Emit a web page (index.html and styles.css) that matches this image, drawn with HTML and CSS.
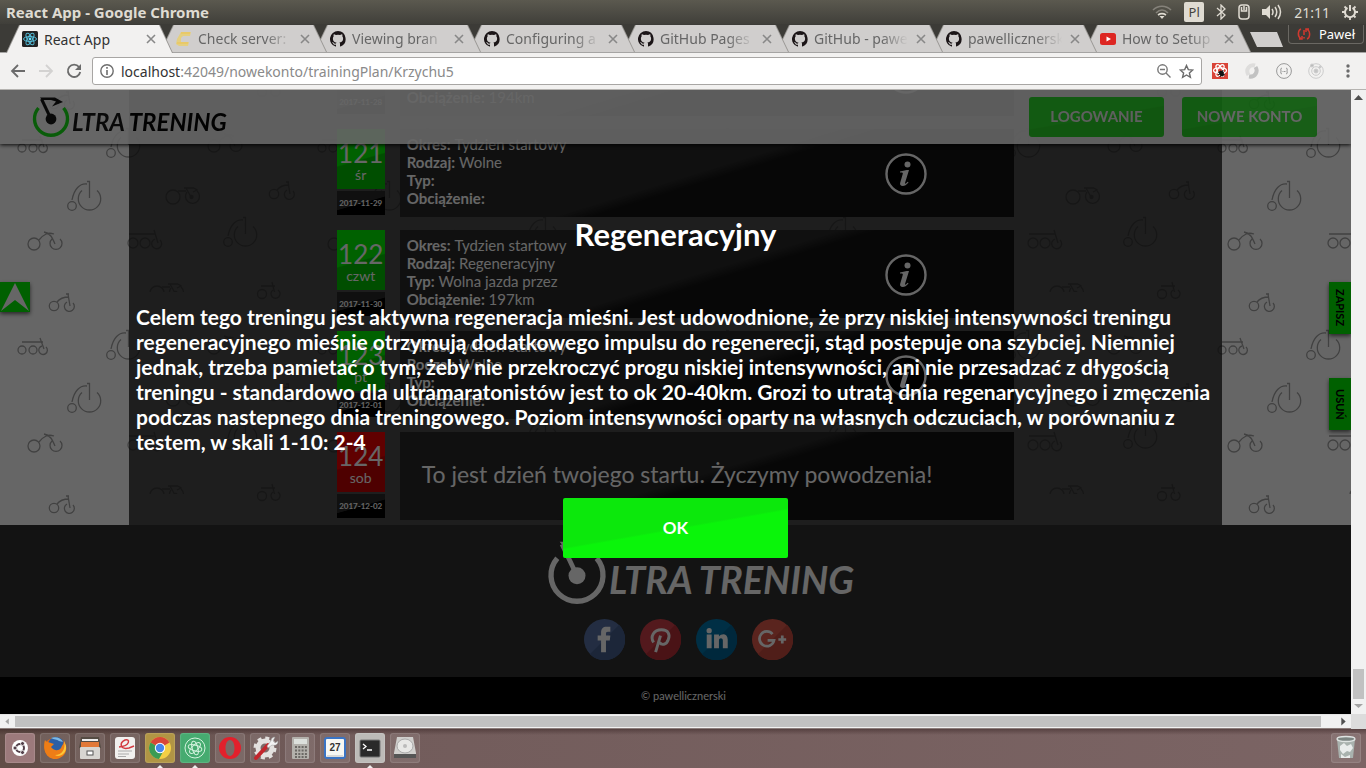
FILE: index.html
```html
<!DOCTYPE html>
<html lang="pl">
<head>
<meta charset="utf-8">
<title>React App</title>
<link rel="stylesheet" href="styles.css">
</head>
<body>
<svg class="defs" aria-hidden="true">
  <defs>
    <symbol id="github" viewBox="0 0 16 16"><path fill="#1b1517" d="M8 0a8 8 0 0 0-2.5 15.6c.4.1.5-.2.5-.4v-1.5c-2.200.5-2.700-1-2.700-1-.4-.9-.9-1.200-.9-1.200-.7-.5.1-.5.1-.5.8.1 1.200.8 1.200.8.7 1.200 1.900.9 2.300.7.1-.5.3-.9.5-1.100-1.800-.2-3.600-.9-3.600-4 0-.9.3-1.600.8-2.100-.1-.2-.4-1 .1-2.100 0 0 .7-.2 2.200.8a7.500 7.500 0 0 1 4 0c1.500-1 2.200-.8 2.200-.8.4 1.100.2 1.900.1 2.100.5.6.8 1.300.8 2.100 0 3.100-1.900 3.700-3.700 3.900.3.3.6.8.6 1.500v2.200c0 .2.1.5.6.4A8 8 0 0 0 8 0z"/></symbol>
    <symbol id="close" viewBox="0 0 10 10"><path d="M1 1l8 8M9 1l-8 8" stroke="currentColor" stroke-width="1.600" fill="none"/></symbol>
    <symbol id="wheel" viewBox="0 0 38 40">
      <path class="rim" d="M6.500 11a16.500 16.500 0 1 0 25 0" fill="none" stroke-width="3.400"/>
      <g class="fork"><circle cx="19" cy="22" r="5.400"/><path d="M19 22L9.500 2" stroke-width="3" fill="none"/><path d="M8 .5h15l8 4.500-11 4.500 4-5-5-1.500H10z"/></g>
    </symbol>
    <symbol id="info" viewBox="0 0 42 42"><circle cx="21" cy="21" r="19.500" fill="#000" stroke="#fff" stroke-width="2.400"/><circle cx="22.500" cy="11.500" r="3" fill="#fff"/><path fill="#fff" d="M15 18.500c3-.8 6-1.500 9-1.500l-4 13c-.2 1 .6 1 2.800-1.200l.7.8c-2 2.500-4 3.400-5.700 3.400-2.200 0-3.200-1.200-2.600-3.200l2.600-9c.3-1-.6-1.400-2.800-1.200z"/></symbol>
    <pattern id="bikes" width="300" height="202" patternUnits="userSpaceOnUse">
      <g id="bike-set" fill="none" stroke="#a2a2a2" stroke-width="1.300">
        <g id="penny"><circle cx="72" cy="116" r="4.300"/><path d="M82 100.500a11.200 11.200 0 1 0 15 0M89.500 91V108M87 91.500h3M72 110c2-11 8-17 15-16"/></g>
        <use href="#penny" x="156" y="36"/><use href="#penny" x="39" y="-53"/><use href="#penny" x="39" y="149"/>
        <circle cx="133" cy="153" r="5"/><circle cx="145" cy="153" r="5"/><path d="M155 149a5 5 0 1 0 5 1M129 144h26M154 140l4 13"/>
        <circle cx="22" cy="58" r="4"/><circle cx="33" cy="58" r="4"/><path d="M42 54a4.300 4.300 0 1 0 4 1M22 50h21M40 46l4 11"/>
        <g id="road"><circle cx="173" cy="107" r="7"/><path d="M187 102a7 7 0 1 0 10-1M178 101h8M184 98h10M186 98l5 9M194 98l3 2-4 2"/><circle cx="191.500" cy="107" r="1.500" fill="#a2a2a2"/></g>
        <use href="#road" x="-16" y="96"/>
        <g id="city"><circle cx="274" cy="104" r="4.700"/><path d="M287 100a5 5 0 1 0 6 1M277 100c3-4 7-5 12-5M288 92l2 12M286 92h3"/></g>
        <use href="#city" x="-220" y="112"/><use href="#city" x="-220" y="-90"/>
        <g id="cruiser"><circle cx="34" cy="154" r="6"/><path d="M52 149a6 6 0 1 0 8 0M39 150c5-6 9-8 15-6M44 142c6 1 8 5 11 12"/></g>
        <use href="#cruiser" x="180" y="-98"/>
        <circle cx="262" cy="2" r="4.500"/><path d="M273-2a4.500 4.500 0 1 0 5 0"/><circle cx="262" cy="204" r="4.500"/><path d="M273 200a4.500 4.500 0 1 0 5 0M261 196h14M272 192l3 12"/>
      </g>
    </pattern>
  </defs>
</svg>

<header class="titlebar">
  <h1 class="window-title">React App - Google Chrome</h1>
  <div class="tray">
    <svg width="20" height="14" viewBox="0 0 20 14" fill="none" stroke-width="1.600"><path d="M1 5c5-5 13-5 18 0M4 8c4-4 8-4 12 0" stroke="#85827a"/><path d="M6 10c3-2 5-2 8 0" stroke="#dfdbd2"/><path d="M7.500 11l2.500 3 2.500-3z" fill="#dfdbd2"/></svg>
    <span class="lang">Pl</span>
    <svg width="10" height="16" viewBox="0 0 10 16"><path d="M1 4l8 7-4 4V1l4 4-8 7" fill="none" stroke="#dfdbd2" stroke-width="1.300"/></svg>
    <svg width="12" height="16" viewBox="0 0 12 16" fill="none" stroke="#dfdbd2" stroke-width="1.500"><rect x="1" y="1" width="10" height="14" rx="3"/><path d="M3.500 3v4h5V3M6 2v4"/></svg>
    <svg width="20" height="16" viewBox="0 0 20 16"><path d="M0 5h4l4-4v14l-4-4H0z" fill="#dfdbd2"/><path d="M10 5q2 3 0 6M13 3q3.500 5 0 10M16 1q5 7 0 14" fill="none" stroke="#dfdbd2" stroke-width="1.500"/></svg>
    <time>21:11</time>
    <svg width="16" height="16" viewBox="0 0 16 16" fill="none" stroke="#dfdbd2"><path d="M5.500 3.800a5 5 0 1 0 5 0M8 1v6" stroke-width="2"/><path d="M2.500 2.500l2 2M13.500 2.500l-2 2M0 8h3M16 8h-3M2.500 13.500l2-2M13.500 13.500l-2-2M8 13v3" stroke-width="1.800"/></svg>
  </div>
</header>

<nav class="tabs" aria-label="Karty">
  <div class="tab active"><svg class="fav" viewBox="0 0 16 16"><rect width="16" height="16" rx="1.500" fill="#222"/><g fill="none" stroke="#53bbd6"><ellipse cx="8" cy="8" rx="6.500" ry="2.500"/><ellipse cx="8" cy="8" rx="6.500" ry="2.500" transform="rotate(60 8 8)"/><ellipse cx="8" cy="8" rx="6.500" ry="2.500" transform="rotate(120 8 8)"/></g><circle cx="8" cy="8" r="1.400" fill="#61dafb"/></svg><span class="label">React App</span><button class="x" aria-label="Zamknij"><svg><use href="#close"/></svg></button></div>
  <div class="tab"><svg class="fav" viewBox="0 0 16 16"><path d="M5 1h10l-1 4H7l-2 2v4h8l-1 4H3L0 13l1-5z" fill="#e4cf80"/><path d="M5 2h9M1 12h11" stroke="#edc350"/></svg><span class="label">Check server:</span><button class="x" aria-label="Zamknij"><svg><use href="#close"/></svg></button></div>
  <div class="tab"><svg class="fav"><use href="#github"/></svg><span class="label">Viewing bran</span><button class="x" aria-label="Zamknij"><svg><use href="#close"/></svg></button></div>
  <div class="tab"><svg class="fav"><use href="#github"/></svg><span class="label">Configuring a</span><button class="x" aria-label="Zamknij"><svg><use href="#close"/></svg></button></div>
  <div class="tab"><svg class="fav"><use href="#github"/></svg><span class="label">GitHub Pages</span><button class="x" aria-label="Zamknij"><svg><use href="#close"/></svg></button></div>
  <div class="tab"><svg class="fav"><use href="#github"/></svg><span class="label">GitHub - pawe</span><button class="x" aria-label="Zamknij"><svg><use href="#close"/></svg></button></div>
  <div class="tab"><svg class="fav"><use href="#github"/></svg><span class="label">pawellicznersk</span><button class="x" aria-label="Zamknij"><svg><use href="#close"/></svg></button></div>
  <div class="tab"><svg class="fav" viewBox="0 0 16 16"><rect y="2" width="16" height="12" rx="2.500" fill="#dd2622"/><path d="M6.500 5.500v5L11 8z" fill="#fff"/></svg><span class="label">How to Setup</span><button class="x" aria-label="Zamknij"><svg><use href="#close"/></svg></button></div>
  <button class="new-tab" aria-label="Nowa karta"></button>
  <button class="profile"><svg width="14" height="12" viewBox="0 0 14 12" fill="none" stroke="#d2392f" stroke-width="1.500"><path d="M4 1C1 2 0 8 4 11M2 11h3V8M10 11c3-1 4-7 0-10M12 1H9v3M7 2v5M7 9v1.500"/></svg>Paweł</button>
</nav>

<div class="toolbar">
  <button class="tool" aria-label="Wstecz"><svg width="16" height="16" viewBox="0 0 16 16" fill="none" stroke="#6b6b6b" stroke-width="1.800"><path d="M15 8H2M8 2L2 8l6 6"/></svg></button>
  <button class="tool" aria-label="Dalej"><svg width="16" height="16" viewBox="0 0 16 16" fill="none" stroke="#d3d2d1" stroke-width="1.800"><path d="M1 8h13M8 2l6 6-6 6"/></svg></button>
  <button class="tool" aria-label="Odśwież"><svg width="16" height="16" viewBox="0 0 16 16"><path d="M13 4a6.200 6.200 0 1 0 1.200 5" fill="none" stroke="#6b6b6b" stroke-width="1.900"/><path d="M15 1v6H9z" fill="#6b6b6b"/></svg></button>
  <div class="omnibox">
    <svg width="14" height="14" viewBox="0 0 14 14"><circle cx="7" cy="7" r="6.200" fill="none" stroke="#6e6e6e" stroke-width="1.400"/><path d="M7 6v5M7 3v1.700" stroke="#6e6e6e" stroke-width="1.600"/></svg>
    <label for="url">localhost</label><input id="url" type="text" value=":42049/nowekonto/trainingPlan/Krzychu5">
    <svg width="14" height="14" viewBox="0 0 14 14" fill="none" stroke="#777" stroke-width="1.400"><circle cx="5.500" cy="5.500" r="4.700"/><path d="M9 9l4.500 4.500M3 5.500h5"/></svg>
    <svg width="15" height="15" viewBox="0 0 15 15" fill="none" stroke="#6b6b6b" stroke-width="1.400"><path d="M7.500 1.500l1.800 4.100 4.500.4-3.400 3 1 4.400-3.900-2.400-3.900 2.400 1-4.400-3.400-3 4.500-.4z"/></svg>
  </div>
  <div class="extensions">
    <svg width="16" height="16" viewBox="0 0 16 16"><path fill="#d94337" d="M0 0h16v16H0z"/><g fill="none" stroke="#fff" stroke-width="1.200"><ellipse cx="8" cy="7.500" rx="6.500" ry="2.600"/><ellipse cx="8" cy="7.500" rx="6.500" ry="2.600" transform="rotate(60 8 7.500)"/><ellipse cx="8" cy="7.500" rx="6.500" ry="2.600" transform="rotate(120 8 7.500)"/></g><ellipse cx="9.500" cy="10.500" rx="2" ry="3.200" fill="#111" transform="rotate(-35 9.500 10.500)"/><path d="M6 9l7 3M11 7l-3 7M6 12l6-3" stroke="#111"/></svg>
    <svg width="16" height="16" viewBox="0 0 16 16" fill="none" stroke-width="4"><path d="M11 2.500C6 1 1 6 4.500 12" stroke="#dedddc"/><path d="M5 13.500c6 1 9.500-5 6.500-9.500" stroke="#c2c2c2"/></svg>
    <svg width="16" height="16" viewBox="0 0 16 16" fill="none" stroke="#999"><circle cx="8" cy="8" r="7.400"/><path d="M6 5q-2 0-1 3 -1 3 1 3M10 5q2 0 1 3 1 3-1 3"/><path d="M6.500 8.500h3.500" stroke-dasharray="1 .5"/></svg>
    <svg width="16" height="16" viewBox="0 0 16 16" fill="none" stroke="#ccc"><circle cx="8" cy="8" r="7.300"/><circle cx="8" cy="8" r="4.300"/><circle cx="8" cy="8" r="2" fill="#c4c4c4"/><circle cx="4" cy="2.500" r="1.500" fill="#bbb"/><circle cx="12" cy="4" r="1" fill="#bbb"/></svg>
    <svg width="16" height="16" viewBox="0 0 16 16" fill="#6b6b6b"><circle cx="8" cy="3" r="1.700"/><circle cx="8" cy="8" r="1.700"/><circle cx="8" cy="13" r="1.700"/></svg>
  </div>
</div>

<div class="window">
  <div class="page">
    <svg class="pattern" aria-hidden="true"><rect width="100%" height="100%" fill="url(#bikes)"/></svg>
    <main class="plan">
      <article class="day">
        <div class="stamp"><div class="tile"><strong>120</strong><span>wt</span></div><time>2017-11-28</time></div>
        <div class="card"><dl><div><dt>Okres:</dt> <dd>Tydzien startowy</dd></div><div><dt>Rodzaj:</dt> <dd>Regeneracyjny</dd></div><div><dt>Typ:</dt> <dd>Wolna jazda przez</dd></div><div><dt>Obciążenie:</dt> <dd>194km</dd></div></dl><button class="info" aria-label="Informacje"><svg><use href="#info"/></svg></button></div>
      </article>
      <article class="day">
        <div class="stamp"><div class="tile"><strong>121</strong><span>śr</span></div><time>2017-11-29</time></div>
        <div class="card"><dl><div><dt>Okres:</dt> <dd>Tydzien startowy</dd></div><div><dt>Rodzaj:</dt> <dd>Wolne</dd></div><div><dt>Typ:</dt> <dd></dd></div><div><dt>Obciążenie:</dt> <dd></dd></div></dl><button class="info" aria-label="Informacje"><svg><use href="#info"/></svg></button></div>
      </article>
      <article class="day">
        <div class="stamp"><div class="tile"><strong>122</strong><span>czwt</span></div><time>2017-11-30</time></div>
        <div class="card"><dl><div><dt>Okres:</dt> <dd>Tydzien startowy</dd></div><div><dt>Rodzaj:</dt> <dd>Regeneracyjny</dd></div><div><dt>Typ:</dt> <dd>Wolna jazda przez</dd></div><div><dt>Obciążenie:</dt> <dd>197km</dd></div></dl><button class="info" aria-label="Informacje"><svg><use href="#info"/></svg></button></div>
      </article>
      <article class="day">
        <div class="stamp"><div class="tile"><strong>123</strong><span>pt</span></div><time>2017-12-01</time></div>
        <div class="card"><dl><div><dt>Okres:</dt> <dd>Tydzien startowy</dd></div><div><dt>Rodzaj:</dt> <dd>Wolne</dd></div><div><dt>Typ:</dt> <dd></dd></div><div><dt>Obciążenie:</dt> <dd></dd></div></dl><button class="info" aria-label="Informacje"><svg><use href="#info"/></svg></button></div>
      </article>
      <article class="day start">
        <div class="stamp"><div class="tile"><strong>124</strong><span>sob</span></div><time>2017-12-02</time></div>
        <div class="card"><p>To jest dzień twojego startu. Życzymy powodzenia!</p></div>
      </article>
    </main>
    <footer class="footer">
      <div class="footer-main">
        <div class="logo logo-large"><svg><use href="#wheel"/></svg><span>LTRA TRENING</span></div>
        <div class="social">
          <a href="#" aria-label="Facebook"><svg viewBox="0 0 42 42"><circle cx="21" cy="21" r="21" fill="#5872a6"/><path d="M36 6a21 21 0 0 1-30 30z" fill="#465f90"/><path d="M17.500 34V22H14v-5h3.500v-3c0-4 2-6 5.500-6h4v5h-2.500c-1.500 0-2 .7-2 2v2H27l-.6 5h-3.900v12z" fill="#fff"/></svg></a>
          <a href="#" aria-label="Pinterest"><svg viewBox="0 0 42 42"><circle cx="21" cy="21" r="21" fill="#d04049"/><path d="M36 6a21 21 0 0 1-30 30z" fill="#b83039"/><path d="M14 24c-4-6 0-13 8-13 7 0 9 5 7 10-2 6-7 6-9 3M21 17l-5 17" fill="none" stroke="#fff" stroke-width="3"/></svg></a>
          <a href="#" aria-label="LinkedIn"><svg viewBox="0 0 42 42"><circle cx="21" cy="21" r="21" fill="#0077ad"/><path d="M36 6a21 21 0 0 1-30 30z" fill="#006496"/><circle cx="13.500" cy="12" r="2.700" fill="#fff"/><path d="M11 16h5v14h-5zM18.500 16h5v2c3-4 9-3 9 3v9h-5v-8c0-3-4-3-4 0v8h-5z" fill="#fff"/></svg></a>
          <a href="#" aria-label="Google+"><svg viewBox="0 0 42 42"><circle cx="21" cy="21" r="21" fill="#e15a4d"/><path d="M36 6a21 21 0 0 1-30 30z" fill="#c84b40"/><path d="M21 15.500a7.500 7.500 0 1 0 1.500 6.500H16M27 21h8M31 17v8" fill="none" stroke="#fff" stroke-width="2.800"/></svg></a>
        </div>
      </div>
      <p class="copyright">© pawellicznerski</p>
    </footer>
    <div class="site-header">
      <div class="logo"><svg><use href="#wheel"/></svg><span>LTRA TRENING</span></div>
      <div class="account"><button>LOGOWANIE</button><button>NOWE KONTO</button></div>
    </div>
    <button class="to-top" aria-label="Do góry"><svg viewBox="0 0 30 30"><path d="M15 1l14 28-14-11L1 29z" fill="#fff"/></svg></button>
    <button class="side save">ZAPISZ</button>
    <button class="side remove">USUŃ</button>
    <div class="overlay">
      <section class="dialog" role="dialog" aria-labelledby="dialog-title">
        <h2 id="dialog-title">Regeneracyjny</h2>
        <p>Celem tego treningu jest aktywna regeneracja mieśni. Jest udowodnione, że przy niskiej intensywności treningu regeneracyjnego mieśnie otrzymują dodatkowego impulsu do regenerecji, stąd postepuje ona szybciej. Niemniej jednak, trzeba pamietać o tym, żeby nie przekroczyć progu niskiej intensywności, ani nie przesadzać z dłygością treningu - standardowo dla ultramaratonistów jest to ok 20-40km. Grozi to utratą dnia regenarycyjnego i zmęczenia podczas nastepnego dnia treningowego. Poziom intensywności oparty na własnych odczuciach, w porównaniu z testem, w skali 1-10: 2-4</p>
        <button class="ok">OK</button>
      </section>
    </div>
  </div>
  <div class="vscroll"><svg viewBox="0 0 15 15"><path d="M3 10l4.500-5 4.500 5z" fill="#505050"/></svg><i></i><svg viewBox="0 0 15 15"><path d="M3 5h9l-4.500 4z" fill="#a3a3a3"/></svg></div>
  <div class="hscroll"><svg viewBox="0 0 15 15"><path d="M9 4v7L5 7.500z" fill="#a3a3a3"/></svg><i></i><svg viewBox="0 0 15 15"><path d="M5 3v9l5-4.500z" fill="#505050"/></svg></div>
  <div class="corner"></div>
</div>

<nav class="dock" aria-label="Programy">
  <button class="app ubuntu" aria-label="Ubuntu"><svg viewBox="0 0 30 30"><circle cx="15" cy="15" r="8" fill="#fff"/><circle cx="15" cy="15" r="4" fill="none" stroke="#54404a" stroke-width="2"/><g fill="#54404a" stroke="#fff" stroke-width=".8"><circle cx="10" cy="15" r="2"/><circle cx="17.500" cy="10.500" r="2"/><circle cx="17.500" cy="19.500" r="2"/></g></svg></button>
  <button class="app" aria-label="Firefox"><svg viewBox="0 0 30 30"><circle cx="15" cy="15" r="10.500" fill="#e46a13"/><circle cx="16" cy="12" r="8" fill="#2c5fa5"/><path d="M11 5c5-2 10 0 12 4l-4-1c-2-2-5-1-8-3z" fill="#7cb9e6"/><path d="M5 7c1 2 4 2 6 3l3 1-3 3c2 3 7 5 10 1 1-3 3-4 3-7 6 10-1 18-9 18S2 17 5 7z" fill="#ee7d16"/><path d="M24 8c2 8-2 14-9 14 4 3 12-1 11-9z" fill="#fcc737"/></svg></button>
  <button class="app" aria-label="Pliki"><svg viewBox="0 0 30 30"><path d="M6 4h18l2 11H4z" fill="#544b43"/><path d="M7 6h16v2H7z" fill="#eee"/><path d="M6 9h18v5H6z" fill="#e17837"/><rect x="5" y="14" width="20" height="12" rx="1" fill="#d7d5d1"/><rect x="12" y="18" width="6" height="4" fill="#fff" stroke="#555"/></svg></button>
  <button class="app" aria-label="Dokumenty"><svg viewBox="0 0 30 30"><rect x="5" y="4" width="20" height="22" rx="3" fill="#f1f0ee"/><path d="M9 14c12-1 11-9 6-7-6 3-5 10 4 8l5-2" fill="none" stroke="#d33a40" stroke-width="1.500"/><path d="M8 18h14M8 21h11M8 23.500h8" stroke="#aaa"/></svg></button>
  <button class="app chrome running" aria-label="Chrome"><svg viewBox="0 0 30 30"><circle cx="15" cy="15" r="11" fill="#f3cf45"/><path d="M15 15L5.500 9.500a11 11 0 0 1 19 0z" fill="#d84738"/><path d="M15 15L5.500 9.500A11 11 0 0 0 14 26l5-9z" fill="#3b9b54"/><circle cx="15" cy="15" r="5.200" fill="#fff"/><circle cx="15" cy="15" r="4.200" fill="#4786eb"/></svg></button>
  <button class="app atom running" aria-label="Atom"><svg viewBox="0 0 30 30" fill="none" stroke="#d5f3df"><circle cx="15" cy="15" r="10"/><ellipse cx="15" cy="15" rx="7" ry="2.800" transform="rotate(15 15 15)"/><ellipse cx="15" cy="15" rx="7" ry="2.800" transform="rotate(75 15 15)"/><ellipse cx="15" cy="15" rx="7" ry="2.800" transform="rotate(135 15 15)"/></svg></button>
  <button class="app" aria-label="Opera"><svg viewBox="0 0 30 30"><path fill-rule="evenodd" d="M15 4a11 11 0 1 0 0 22 11 11 0 0 0 0-22zm0 3c3 0 4.500 4 4.500 8S18 23 15 23s-4.500-4-4.500-8S12 7 15 7z" fill="#e2202c"/></svg></button>
  <button class="app" aria-label="Ustawienia"><svg viewBox="0 0 30 30"><circle cx="15" cy="15" r="7" fill="none" stroke="#e3e1df" stroke-width="5"/><circle cx="15" cy="15" r="10" fill="none" stroke="#e3e1df" stroke-width="3" stroke-dasharray="4 3.850"/><path d="M6 25L18 12" stroke="#c3262c" stroke-width="4" stroke-linecap="round"/><path d="M17 13l4-5c0-3 2-4 4-4l-2 4 2 2 3-2c0 4-3 5-6 4l-4 3z" fill="#f2f2f2" stroke="#999" stroke-width=".5"/></svg></button>
  <button class="app" aria-label="Kalkulator"><svg viewBox="0 0 30 30"><rect x="7" y="4" width="17" height="22" rx="1" fill="#b3b1ac"/><rect x="9" y="6" width="13" height="5" fill="#dce0dc"/><path d="M10 14h12M10 17.500h12M10 21h12M10 24h12" stroke="#6b6965" stroke-width="2" stroke-dasharray="2 1.300"/></svg></button>
  <button class="app" aria-label="Kalendarz"><svg viewBox="0 0 30 30"><rect x="5" y="5" width="20" height="20" rx="2" fill="#f7f7f3" stroke="#3a74c4" stroke-width="2"/><path d="M7 23h16" stroke="#bbb"/><text x="15" y="18" text-anchor="middle" class="cal">27</text></svg></button>
  <button class="app terminal running" aria-label="Terminal"><svg viewBox="0 0 30 30"><rect x="5" y="7" width="20" height="17" rx="1" fill="#2a2a2a" stroke="#777"/><path d="M8 11l3 2.500L8 16M12 17h5" fill="none" stroke="#fff" stroke-width="1.300"/></svg></button>
  <button class="app" aria-label="Dysk"><svg viewBox="0 0 30 30"><path d="M7 4h16l3 16v5H4v-5z" fill="#d0cfcd"/><path d="M4 21h22v4H4z" fill="#555"/><ellipse cx="15" cy="13" rx="8" ry="7" fill="#e8e8e6" stroke="#aaa"/><circle cx="15" cy="13" r="2" fill="#bbb"/></svg></button>
  <button class="app trash" aria-label="Kosz"><svg viewBox="0 0 30 30"><path d="M6 6h18l-2 19H8z" fill="#a9b2ae"/><ellipse cx="15" cy="6" rx="9" ry="2.500" fill="#7d8683" stroke="#dfe4e2" stroke-width="1.300"/><path d="M9 13l4-3 3 3 4-2 2 4-3 4-3-1-4 3-3-4zM10 21l4 3 5-2v3h-9z" fill="#e9eceb"/></svg></button>
</nav>
</body>
</html>
```
FILE: styles.css
```css
* { box-sizing: border-box; }
body {
  margin: 0;
  height: 100vh;
  display: flex;
  flex-direction: column;
  overflow: hidden;
  font-family: Lato, "Liberation Sans", sans-serif;
}
button { border: 0; padding: 0; background: none; font: inherit; color: inherit; display: block; }
button svg, a svg { display: block; width: 100%; height: 100%; }
h1, h2, p, dl, dd { margin: 0; }
svg { flex: none; }
.defs { position: absolute; width: 0; height: 0; }

/* Window chrome */
.titlebar, .tabs, .toolbar { font-family: "Noto Sans", "Open Sans", sans-serif; flex: none; }
.titlebar {
  height: 24px;
  padding: 0 8px 0 6px;
  display: flex;
  align-items: center;
  justify-content: space-between;
  background: linear-gradient(#5b594f, #403f3a);
  color: #dfdbd2;
}
.window-title { font-size: 15px; line-height: 20px; font-weight: 700; }
.tray { display: flex; align-items: center; gap: 12px; font-size: 14px; }
.lang { width: 20px; height: 20px; border-radius: 2px; background: #dfdbd2; color: #45433e; font-size: 13px; line-height: 20px; text-align: center; }

.tabs {
  height: 29px;
  padding: 1px 2px 0 6px;
  display: flex;
  background: #3c3b37;
  border-bottom: 1px solid #a5a4a3;
}
.tab {
  position: relative;
  flex: 0 1 167px;
  min-width: 0;
  height: 27px;
  margin-right: -13px;
  padding: 0 17px 0 16px;
  display: flex;
  align-items: center;
  gap: 6px;
  color: #666;
  font-size: 14px;
}
.tab::before, .tab::after {
  content: "";
  position: absolute;
  inset: 0;
  clip-path: polygon(13px 0, calc(100% - 13px) 0, 100% 100%, 0 100%);
  background: #999794;
}
.tab::after { inset: 0 1px; background: #d0cecd; }
.tab > * { position: relative; z-index: 1; }
.tab:nth-child(1) { z-index: 9; }
.tab:nth-child(2) { z-index: 8; }
.tab:nth-child(3) { z-index: 7; }
.tab:nth-child(4) { z-index: 6; }
.tab:nth-child(5) { z-index: 5; }
.tab:nth-child(6) { z-index: 4; }
.tab:nth-child(7) { z-index: 3; }
.tab:nth-child(8) { z-index: 2; }
.tab.active { height: 28px; color: #333; }
.tab.active::after { background: #f2f1f0; }
.fav { width: 16px; height: 16px; }
.label { flex: 1; min-width: 0; overflow: hidden; white-space: nowrap; mask-image: linear-gradient(90deg, #000 70%, transparent 98%); }
.active .label { mask-image: none; }
.x { width: 10px; height: 10px; color: #888; }
.new-tab { width: 33px; height: 15px; margin: 7px 0 0 12px; background: #d0cecd; clip-path: polygon(0 0, 27px 0, 100% 100%, 7px 100%); }
.profile {
  height: 19px;
  margin-left: auto;
  padding: 0 8px;
  display: flex;
  align-items: center;
  gap: 8px;
  border: 1px solid #6a6863;
  border-top: 0;
  border-radius: 0 0 4px 4px;
  color: #fff;
  font-size: 13px;
}
.profile svg { width: 14px; height: 12px; }

.toolbar {
  height: 37px;
  padding: 0 10px;
  display: flex;
  align-items: center;
  gap: 12px;
  background: #f2f1f0;
  border-bottom: 1px solid #b5b3b0;
}
.tool { width: 16px; height: 16px; }
.omnibox {
  flex: 1;
  height: 28px;
  padding: 0 7px;
  display: flex;
  align-items: center;
  background: #fff;
  border: 1px solid #a8a6a4;
  border-radius: 3px;
  font-size: 14px;
  color: #333;
  margin-left: -2px;
}
.omnibox label { margin-left: 7px; }
.omnibox input { flex: 1; min-width: 0; border: 0; padding: 0; font: inherit; color: #8a8a8a; background: none; outline: 0; }
.omnibox input + svg { margin-right: 8px; }
.extensions { display: flex; gap: 16px; margin: 0 0 0 -2px; }

/* Browser viewport */
.window {
  flex: 1;
  min-height: 0;
  display: grid;
  grid-template-columns: minmax(0, 1fr) 15px;
  grid-template-rows: minmax(0, 1fr) 15px;
}
.vscroll, .hscroll { display: flex; background: #f1f1f1; }
.vscroll svg, .hscroll svg { width: 15px; height: 15px; }
.vscroll { flex-direction: column; }
.vscroll i { width: 11px; height: 30px; margin: auto 2px 0; background: #c1c1c1; }
.hscroll { border-top: 1px solid #e4e4e4; border-bottom: 1px solid #8b7d7b; }
.hscroll svg { height: 13px; }
.hscroll i { flex: 1; margin: 1px 15px 1px 0; background: #c1c1c1; }
.corner { background: #dcdcdc; }

.page {
  position: relative;
  overflow: hidden;
  display: flex;
  flex-direction: column;
  justify-content: flex-end;
  align-items: center;
  background: #fff;
}
.pattern { position: absolute; inset: 0; width: 100%; height: 100%; }
.plan {
  position: relative;
  flex: none;
  width: 80.9%;
  padding-bottom: 5px;
  display: flex;
  flex-direction: column;
  align-items: center;
  gap: 13px;
  background: rgba(30, 30, 30, .8);
  color: #fff;
}
.day { width: 62%; display: flex; gap: 15px; }
.stamp { flex: none; width: 48px; display: flex; flex-direction: column; gap: 2px; }
.tile {
  height: 60px;
  padding-top: 9px;
  display: flex;
  flex-direction: column;
  align-items: center;
  background: linear-gradient(164deg, #00f200 50%, #00c200 52%);
}
.start .tile { background: linear-gradient(164deg, #f00000 50%, #c20000 52%); }
.tile strong { font-size: 26px; line-height: 30px; font-weight: 400; }
.tile span { font-size: 14px; line-height: 14px; }
.stamp time {
  height: 24px;
  font-size: 8px;
  line-height: 24px;
  font-weight: 700;
  text-align: center;
  white-space: nowrap;
  background: linear-gradient(164deg, #2a2a2a 50%, #000 52%);
}
.card {
  flex: 1;
  min-width: 0;
  height: 88px;
  padding: 6px 87px 0 7px;
  display: flex;
  justify-content: space-between;
  background: linear-gradient(163deg, #282828 49%, #121212 53%);
}
.start .card { padding-right: 0; }
.card dl { font-size: 15px; line-height: 18px; }
.card dt, .card dd { display: inline; }
.card dt { font-weight: 700; }
.card p { padding: 21px 0 0 15px; font-size: 23px; line-height: 30px; white-space: nowrap; }
.info { width: 42px; height: 42px; margin-top: 18px; }

.logo { --rim: #00e400; --ink: #000; display: flex; align-items: flex-start; font-weight: 700; font-style: italic; color: #000; }
.logo svg { width: 38px; height: 40px; }
#wheel .rim { stroke: var(--rim); }
#wheel .fork { fill: var(--ink); stroke: var(--ink); stroke-width: 0; }
.logo span { margin: 9px 0 0 2px; font-size: 24px; line-height: 32px; white-space: nowrap; }
.logo-large { --rim: #fff; --ink: #fff; color: #fff; margin-left: 24px; }
.logo-large svg { width: 60px; height: 63px; }
.logo-large span { margin: 14px 0 0 2px; font-size: 38px; line-height: 48px; }

.footer { position: relative; flex: none; width: 100%; background: #303030; color: #fff; }
.footer-main {
  height: 152px;
  margin-right: -26px;
  padding-top: 16px;
  display: flex;
  flex-direction: column;
  align-items: center;
  gap: 15px;
}
.social { display: flex; gap: 15px; }
.social a { width: 41px; height: 41px; }
.copyright { height: 37px; padding-left: 16px; background: #000; font-size: 11px; line-height: 37px; text-align: center; }

.site-header {
  position: absolute;
  inset: 0 0 auto;
  height: 54px;
  padding: 7px 34px 0 32px;
  display: flex;
  justify-content: space-between;
  background: #fff;
  opacity: .9;
  box-shadow: 0 1px 4px #000;
}
.account { display: flex; gap: 18px; }
.account button {
  width: 135px;
  height: 40px;
  padding-bottom: 2px;
  border-radius: 3px;
  background: linear-gradient(170deg, #2cf22a 50%, #28e826 52%);
  color: #fff;
  font-size: 15px;
  font-weight: 700;
}
.to-top, .side { position: absolute; background: #00f000; box-shadow: 0 2px 4px rgba(0, 0, 0, .6); }
.to-top { left: 0; top: 192px; width: 30px; height: 30px; }
.side { right: 0; width: 22px; height: 52px; writing-mode: vertical-rl; font-size: 11px; line-height: 22px; font-weight: 700; color: #000; text-align: center; }
.save { top: 192px; }
.remove { top: 288px; }

/* Training details dialog */
.overlay {
  position: absolute;
  inset: 0;
  padding-top: 126px;
  background: rgba(0, 0, 0, .6);
  color: #fff;
  font-weight: 700;
}
.dialog { width: 80.9%; margin: 0 auto; padding: 0 7px; display: flex; flex-direction: column; align-items: center; }
.dialog h2 { font-size: 31px; line-height: 36px; }
.dialog p { margin: 52px 0 44px; font-size: 21px; line-height: 25px; align-self: stretch; }
.ok {
  width: 225px;
  height: 60px;
  padding-bottom: 2px;
  border-radius: 2px;
  background: linear-gradient(170deg, #0ce80c 50%, #0af50a 52%);
  font-size: 17px;
}

/* Dock */
.dock {
  flex: none;
  height: 39px;
  padding: 4px 5px;
  display: flex;
  gap: 5px;
  background: linear-gradient(rgba(40, 20, 20, .4), rgba(40, 20, 20, 0) 6px), linear-gradient(90deg, #614d47, #725c5b 25%, #7b6464);
}
.app { position: relative; width: 30px; height: 30px; border-radius: 3px; background: rgba(255, 255, 255, .1); box-shadow: inset 0 0 1px 1px rgba(255, 255, 255, .13); }
.ubuntu { background: #9c7a7c; }
.chrome { background: #b19544; }
.atom { background: #46ab70; }
.terminal { background: #bdbbb8; }
.running::after { content: ""; position: absolute; left: 12px; bottom: -5px; border: 3px solid transparent; border-top: 0; border-bottom-color: #eee; }
.trash { margin-left: auto; }
.cal { font: 700 10px "Liberation Sans", sans-serif; fill: #333; }
```
